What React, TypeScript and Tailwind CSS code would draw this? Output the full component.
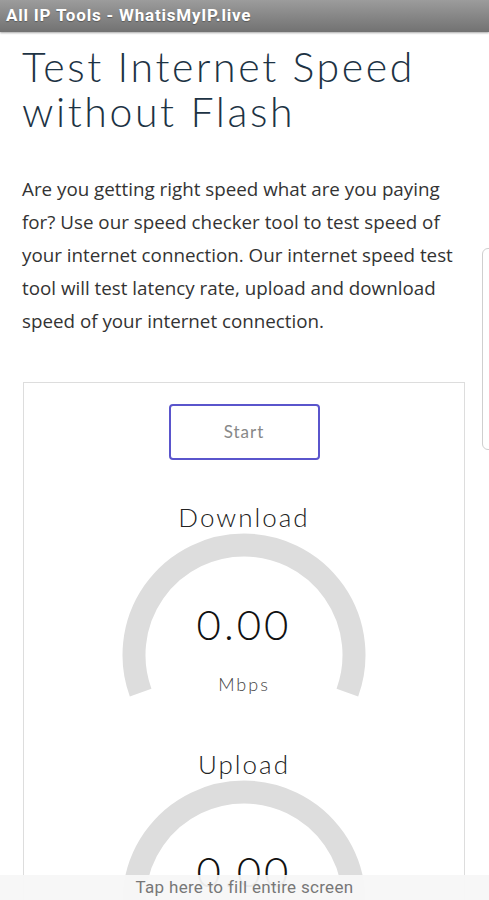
import React from 'react';

const Gauge: React.FC<{ label: string; value: string; unit: string }> = ({ label, value, unit }) => {
  const cx = 122;
  const cy = 122;
  const r = 110;
  const dx = r * Math.cos((20 * Math.PI) / 180);
  const dy = r * Math.sin((20 * Math.PI) / 180);
  const d = `M ${cx - dx} ${cy + dy} A ${r} ${r} 0 1 1 ${cx + dx} ${cy + dy}`;

  return (
    <div className="flex flex-col items-center">
      <div className="text-[26px] leading-[30px] text-[#222] font-['Lato','Liberation_Sans',sans-serif] font-light tracking-[2px]">
        {label}
      </div>
      <div className="relative mt-[1px] w-[244px] h-[170px]">
        <svg width="244" height="170" viewBox="0 0 244 170" className="absolute inset-0">
          <path d={d} fill="none" stroke="#dddddd" strokeWidth="23" />
        </svg>
        <div className="absolute left-0 right-0 top-[67px] flex flex-col items-center">
          <div className="text-[42px] leading-[48px] text-[#111] font-['Lato','Liberation_Sans',sans-serif] font-light tracking-[3px]">
            {value}
          </div>
          <div className="mt-[25px] text-[18px] leading-[22px] text-[#444] font-['Lato','Liberation_Sans',sans-serif] font-light tracking-[2px]">
            {unit}
          </div>
        </div>
      </div>
    </div>
  );
};

export default function App() {
  return (
    <div className="relative h-[900px] w-[489px] overflow-hidden bg-white">
      {/* app title bar */}
      <div className="h-[32px] bg-gradient-to-b from-[#9c9c9c] to-[#727272] shadow-[0_1px_2px_rgba(0,0,0,0.35)] flex items-center px-[6px]">
        <span className="text-white font-bold text-[17px] tracking-[0.8px] font-['Roboto','Liberation_Sans',sans-serif] [text-shadow:0_1px_1px_rgba(0,0,0,0.3)]">
          All IP Tools - WhatisMyIP.live
        </span>
      </div>

      <div className="px-[22px]">
        <h1 className="mt-[12px] text-[41px] leading-[45px] text-[#1d3344] font-['Lato','Liberation_Sans',sans-serif] font-light tracking-[2.6px]">
          Test Internet Speed
          <br />
          without Flash
        </h1>

        <p className="mt-[39px] text-[18.8px] leading-[33px] text-[#333] font-['Open_Sans','Liberation_Sans',sans-serif]">
          Are you getting right speed what are you paying for? Use our speed checker tool to test speed of your internet
          connection. Our internet speed test tool will test latency rate, upload and download speed of your internet
          connection.
        </p>

        <div className="mt-[44px] mr-[2px] ml-[1px] border border-[#dddddd] pt-[21px] pb-[40px] flex flex-col items-center">
          <button className="w-[151px] h-[56px] rounded-[4px] border-2 border-[#5a55cc] text-[17px] tracking-[1px] text-[#888] font-['Lato','Liberation_Sans',sans-serif]">
            Start
          </button>
          <div className="mt-[42px] flex flex-col items-center gap-[46px]">
            <Gauge label="Download" value="0.00" unit="Mbps" />
            <Gauge label="Upload" value="0.00" unit="Mbps" />
          </div>
        </div>
      </div>

      {/* edge handle on the right */}
      <div className="absolute left-[482px] top-[248px] w-[20px] h-[202px] rounded-[6px] border border-[#cfcfcf]" />

      {/* fullscreen hint */}
      <div className="absolute left-0 right-0 bottom-0 h-[25px] bg-[#f7f7f7]/95 flex items-center justify-center">
        <span className="text-[17px] tracking-[0.3px] text-[#777] font-['Roboto','Liberation_Sans',sans-serif]">
          Tap here to fill entire screen
        </span>
      </div>
    </div>
  );
}
